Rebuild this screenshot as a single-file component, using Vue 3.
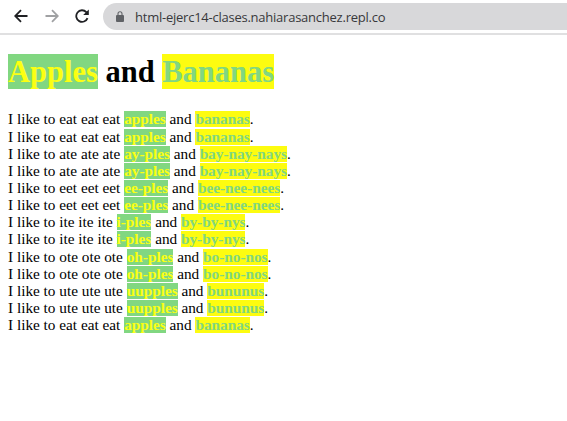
<script setup>
const lines = [
  ['eat', 'apples', 'bananas'],
  ['eat', 'apples', 'bananas'],
  ['ate', 'ay-ples', 'bay-nay-nays'],
  ['ate', 'ay-ples', 'bay-nay-nays'],
  ['eet', 'ee-ples', 'bee-nee-nees'],
  ['eet', 'ee-ples', 'bee-nee-nees'],
  ['ite', 'i-ples', 'by-by-nys'],
  ['ite', 'i-ples', 'by-by-nys'],
  ['ote', 'oh-ples', 'bo-no-nos'],
  ['ote', 'oh-ples', 'bo-no-nos'],
  ['ute', 'uupples', 'bununus'],
  ['ute', 'uupples', 'bununus'],
  ['eat', 'apples', 'bananas'],
]
</script>

<template>
  <div class="window">
    <header class="toolbar">
      <svg class="icon back" viewBox="0 0 14 14"><path d="M13.5 7H1.5M7 1.2 1.2 7 7 12.8" /></svg>
      <svg class="icon forward" viewBox="0 0 14 14"><path d="M.5 7h12M7 1.2 12.8 7 7 12.8" /></svg>
      <svg class="icon reload" viewBox="0 0 14 14">
        <path d="M12.5 9.1A5.8 5.8 0 1 1 11.3 3.1L12.6 4.5" />
        <path class="solid" d="M13.8.4V6H8.2z" />
      </svg>
      <div class="address">
        <svg class="lock" viewBox="0 0 8 11">
          <path class="shackle" d="M2 5V2.7a2 2 0 0 1 4 0V5" />
          <rect y="4" width="8" height="7" rx="1" />
        </svg>
        <span class="url">html-ejerc14-clases.nahiarasanchez.repl.co</span>
      </div>
    </header>
    <main class="page">
      <h1><span class="apple">Apples</span> and <span class="banana">Bananas</span></h1>
      <div class="song">
        <div v-for="([verb, apple, banana], i) in lines" :key="i" class="line">I like to {{ verb }} {{ verb }} {{ verb }} <strong class="apple">{{ apple }}</strong> and <strong class="banana">{{ banana }}</strong>.</div>
      </div>
    </main>
  </div>
</template>

<style>
body {
  margin: 0;
  background: #fff;
}
</style>

<style scoped>
.window {
  height: 421px;
  overflow: hidden;
  background: #fff;
}
.toolbar {
  box-sizing: border-box;
  display: flex;
  align-items: flex-start;
  height: 35px;
  padding: 3px 0 0 14px;
  border-bottom: 2px solid #e0e0e1;
}
.icon {
  flex: none;
  width: 14px;
  height: 14px;
  margin-top: 6px;
  fill: none;
  stroke: #202124;
  stroke-width: 1.8;
}
.forward {
  margin-left: 17px;
  stroke: #a0a1a3;
}
.reload {
  margin-left: 16px;
}
.solid {
  fill: #202124;
  stroke: none;
}
.address {
  box-sizing: border-box;
  display: flex;
  flex: 1;
  align-items: center;
  height: 27px;
  margin-left: 14px;
  padding-left: 13px;
  border-radius: 14px 0 0 14px;
  background: #d8d8da;
}
.lock {
  width: 8px;
  height: 11px;
  margin-bottom: 1px;
  fill: #606266;
}
.shackle {
  fill: none;
  stroke: #606266;
  stroke-width: 1.1;
}
.url {
  margin-left: 11px;
  color: #38393c;
  font: 13px/26px "Open Sans", "Noto Sans", sans-serif;
  letter-spacing: -0.24px;
  white-space: nowrap;
}
.page {
  padding: 19px 8px 0;
  color: #000;
  font-family: "Liberation Serif", "Times New Roman", serif;
}
h1 {
  margin: 0;
  font-size: 30.5px;
  line-height: 37px;
  height: 35px;
}
h1 span {
  display: inline-block;
  height: 35px;
}
.song {
  margin-top: 21.4px;
  font-size: 15.28px;
}
.line {
  height: 17.17px;
  line-height: 17.17px;
  white-space: nowrap;
}
.line strong {
  display: inline-block;
  height: 16px;
  line-height: 16px;
}
.apple {
  background: #81d781;
  color: #fbff12;
}
.banana {
  background: #fdfc10;
  color: #81d781;
}
</style>
